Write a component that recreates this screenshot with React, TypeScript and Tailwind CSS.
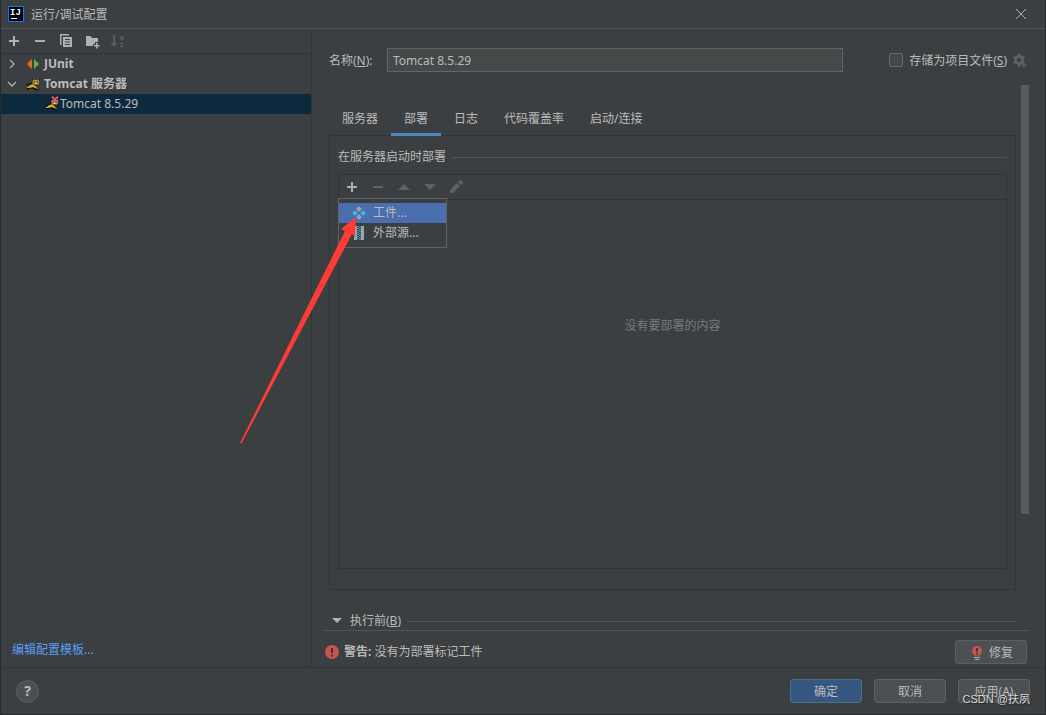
import type { ReactNode } from "react";

const tabs = ["服务器", "部署", "日志", "代码覆盖率", "启动/连接"];

function Icon({ children, className = "" }: { children: ReactNode; className?: string }) {
  return (
    <svg viewBox="0 0 16 16" className={`size-4 shrink-0 ${className}`} fill="none" aria-hidden="true">
      {children}
    </svg>
  );
}

function IconButton({ label, disabled, children }: { label: string; disabled?: boolean; children: ReactNode }) {
  return (
    <button type="button" aria-label={label} disabled={disabled} className={disabled ? "text-[#5f6264]" : "text-[#afb1b3]"}>
      <Icon>{children}</Icon>
    </button>
  );
}

const plus = <path d="M7 3h2v4h4v2H9v4H7V9H3V7h4z" fill="currentColor" />;
const minus = <path d="M3 7h10v2H3z" fill="currentColor" />;

function TomcatIcon({ failed }: { failed?: boolean }) {
  return (
    <Icon>
      {/* tail, back and legs */}
      <path d="M1 8.500h3l4-1.500M2 13.500l2.500-1.500H8l3 1.500h3" stroke="#14140f" strokeWidth="1.500" />
      <path d="M3.500 10.500 5 9l4-.8 1.500 1.300 1 2-1.500.5-2-1-3.500 1z" fill="#dea834" />
      <path d="M2 11.500h2M10.500 11.500l2 1" stroke="#dea834" />
      {/* head */}
      <path d="m7.500 3 1.500 1h3.500L14 3v4.500L12.500 9H9L7.500 7.500z" fill="#b8924a" />
      <path d="M7.500 3v1.500M14 3v1.500M9 9h3.500" stroke="#14140f" />
      <path d="M8.500 5.500H10v1H8.500zM11.500 5.500H13v1h-1.500z" fill="#3b3115" />
      <path d="M10 7h1.500v1H10z" fill="#f4e3b0" />
      {failed && <path d="m8 .5 6 6m0-6-6 6" stroke="#e0555b" strokeWidth="1.800" />}
    </Icon>
  );
}

function Button({ primary, children }: { primary?: boolean; children: ReactNode }) {
  return (
    <button
      type="button"
      className={`flex h-6 w-[72px] items-center justify-center gap-1 rounded-[3px] border pt-px ${
        primary ? "border-[#4c708c] bg-[#365880]" : "border-[#5e6060] bg-[#4c5052]"
      }`}
    >
      {children}
    </button>
  );
}

function Sidebar() {
  return (
    <aside className="flex w-[311px] shrink-0 flex-col border-r border-[#323537]">
      <div className="flex h-[25px] items-center gap-[10px] border-b border-[#323537] px-[5px]">
        <IconButton label="添加">{plus}</IconButton>
        <IconButton label="移除">{minus}</IconButton>
        <IconButton label="复制">
          <path d="M2 1h9v1.500H3.500V12H2z" fill="currentColor" />
          <path d="M5 4h9v10H5zm2 2v1h5V6zm0 2.500v1h5v-1zM7 11v1h5v-1z" fill="currentColor" fillRule="evenodd" />
        </IconButton>
        <IconButton label="新建文件夹">
          <path d="M2 3h4.500L8 5h6v4h-3v2H9v2H2z" fill="currentColor" />
          <path d="M12 10h1.500v2h2v1.500h-2v2H12v-2h-2V12h2z" fill="currentColor" />
        </IconButton>
        <IconButton label="排序" disabled>
          <path d="M4 2v11M1.500 10 4 12.500 6.500 10" stroke="currentColor" strokeWidth="1.500" />
          <g fontSize="7" fontWeight="700" fill="currentColor" className="font-['Liberation_Sans',sans-serif]">
            <text x="10" y="7">a</text>
            <text x="10" y="14">z</text>
          </g>
        </IconButton>
      </div>
      <ul role="tree" className="flex-1">
        <li role="treeitem" aria-expanded="false" className="flex h-5 items-center pl-[3px] font-bold">
          <Icon><path d="m6 4 4 4-4 4" stroke="#afb1b3" strokeWidth="1.300" /></Icon>
          <Icon className="mr-[3px] ml-[5px]">
            <path d="M7 3v10L2 8z" fill="#f26522" />
            <path d="M9 3v10l5-5z" fill="#62b543" />
          </Icon>
          JUnit
        </li>
        <li role="treeitem" aria-expanded="true" className="flex h-5 items-center pl-[3px] font-bold">
          <Icon><path d="m4 6 4 4 4-4" stroke="#afb1b3" strokeWidth="1.300" /></Icon>
          <span className="mr-[3px] ml-[5px]"><TomcatIcon /></span>
          Tomcat 服务器
        </li>
        <li role="treeitem" aria-selected="true" className="flex h-5 items-center bg-[#0d293e] pl-[43px]">
          <TomcatIcon failed />
          Tomcat 8.5.29
        </li>
      </ul>
      <div className="px-[11px] pb-2">
        <a href="#templates" className="text-[#589df6]">编辑配置模板...</a>
      </div>
    </aside>
  );
}

function AddMenu() {
  return (
    <div role="menu" className="absolute top-[23px] -left-px w-[109px] border border-[#616365] bg-[#3c3f41] py-1">
      <button type="button" role="menuitem" className="flex h-5 w-full items-center gap-[6px] bg-[#4b6eaf] pl-3">
        <Icon>
          <g fill="#9aa7b0" stroke="#9aa7b0" strokeWidth="2" strokeLinejoin="round">
            <path d="m8 2.500 1.500 1.500L8 5.500 6.500 4zM8 10.500l1.500 1.500L8 13.500 6.500 12z" />
          </g>
          <g fill="#40b6e0" stroke="#40b6e0" strokeWidth="2" strokeLinejoin="round">
            <path d="m4 6.500 1.500 1.500L4 9.500 2.500 8zM12 6.500l1.500 1.500-1.500 1.500-1.500-1.500z" />
          </g>
        </Icon>
        工件...
      </button>
      <button type="button" role="menuitem" className="flex h-5 w-full items-center gap-[6px] pl-3">
        <Icon>
          <path d="M3 1h3v14H3zM10 1h3v14h-3z" fill="#9aa7b0" />
          <path d="M7 1v14M9 2v13" stroke="#40b6e0" strokeWidth="1.500" strokeDasharray="1 1" />
        </Icon>
        外部源...
      </button>
    </div>
  );
}

function DeployPanel() {
  return (
    <section className="-mt-px flex flex-1 flex-col border border-[#323537] px-2 pt-3 pb-5">
      <div className="flex items-center gap-[6px]">
        <h2>在服务器启动时部署</h2>
        <div className="h-px flex-1 bg-[#515456]" />
      </div>
      <div className="mt-2 flex flex-1 flex-col border border-[#323537]">
        <div className="relative flex h-[25px] items-center gap-[10px] border-b border-[#323537] px-[5px]">
          <IconButton label="添加部署">{plus}</IconButton>
          <IconButton label="移除部署" disabled>{minus}</IconButton>
          <IconButton label="上移" disabled><path d="m2 11 6-6 6 6z" fill="currentColor" /></IconButton>
          <IconButton label="下移" disabled><path d="m2 5 6 6 6-6z" fill="currentColor" /></IconButton>
          <IconButton label="编辑" disabled>
            <path d="m2 11 7-7 3 3-7 7H2zM10 3l2-2h1l2 2v1l-2 2z" fill="currentColor" />
          </IconButton>
          <AddMenu />
        </div>
        <p className="mt-[117px] text-center text-[#787a7c]">没有要部署的内容</p>
      </div>
    </section>
  );
}

export default function App() {
  return (
    <div className="relative flex min-h-screen flex-col border-x border-b border-[#27292a] bg-[#3c3f41] font-['Noto_Sans','Noto_Sans_CJK_SC',sans-serif] text-[12px] leading-[18px] text-[#bbbbbb]">
      <header className="flex h-[29px] items-center border-b border-[#515456] pl-[7px]">
        <svg viewBox="0 0 16 16" className="size-4" aria-hidden="true">
          <path d="M.5.5h15v15H.5z" fill="#000" stroke="#087cfa" />
          <text x="2" y="9" fontSize="9" fontWeight="700" fill="#fff" className="font-['Liberation_Mono',monospace]">IJ</text>
          <path d="M3 12h6v1H3z" fill="#fff" />
        </svg>
        <h1 className="ml-[7px] flex-1 pt-px">运行/调试配置</h1>
        <button type="button" aria-label="关闭" className="mr-4">
          <Icon><path d="m3 3 10 10M13 3 3 13" stroke="#afb1b3" /></Icon>
        </button>
      </header>

      <div className="flex flex-1">
        <Sidebar />
        <main className="flex min-w-0 flex-1 flex-col">
          <div className="flex items-center pt-[19px] pr-[17px] pl-[17px]">
            <label htmlFor="name" className="w-[58px] pt-px">名称(<u>N</u>):</label>
            <input
              id="name"
              defaultValue="Tomcat 8.5.29"
              className="h-6 min-w-0 flex-1 border border-[#646464] bg-[#45494a] px-[5px]"
            />
            <input
              id="store"
              type="checkbox"
              className="ml-[46px] size-[14px] appearance-none rounded-[2px] border border-[#6b6b6b] bg-[#43494a]"
            />
            <label htmlFor="store" className="ml-[6px] pt-px">存储为项目文件(<u>S</u>)</label>
            <button type="button" aria-label="存储选项" className="ml-[5px] text-[#606365]">
              <Icon>
                <circle cx="7" cy="8" r="3.500" stroke="currentColor" strokeWidth="2.500" />
                <path d="M7 1.500v3M7 11.500v3M1.500 4.800 4 6.300M10 9.700l2.500 1.500M1.500 11.200 4 9.700M10 6.300l2.500-1.500" stroke="currentColor" strokeWidth="2.500" />
                <path d="M9 12.500h6l-3 3z" fill="currentColor" />
              </Icon>
            </button>
          </div>

          <div className="flex flex-1 pt-[13px] pr-4">
            <div className="flex min-w-0 flex-1 flex-col pt-4 pl-[17px]">
              <div role="tablist" className="z-10 flex">
                {tabs.map((tab) => (
                  <button
                    key={tab}
                    type="button"
                    role="tab"
                    aria-selected={tab === "部署"}
                    className={`h-[35px] border-b-3 px-[13px] pt-1 ${tab === "部署" ? "border-[#4a88c7]" : "border-transparent"}`}
                  >
                    {tab}
                  </button>
                ))}
              </div>
              <DeployPanel />
              <div className="mt-[22px] flex items-center">
                <button type="button" className="flex items-center gap-[5px]">
                  <Icon><path d="M3 5h10l-5 5z" fill="#afb1b3" /></Icon>
                  <span>执行前(<u>B</u>)</span>
                </button>
                <div className="ml-[6px] h-px flex-1 bg-[#515456]" />
              </div>
            </div>
            <div className="ml-[5px] h-[429px] w-2 bg-[#595b5d]" />
          </div>

          <div className="mr-[15px] ml-3 flex h-[37px] items-center border-t border-[#515456] pt-[6px] pr-[3px]">
            <Icon>
              <circle cx="8" cy="8" r="7" fill="#c75450" />
              <path d="M7 4h2v5H7zM7 10.500h2v2H7z" fill="#34383a" />
            </Icon>
            <p className="ml-1 flex-1"><b>警告:</b> 没有为部署标记工件</p>
            <Button>
              <Icon>
                <path d="M8 1a5 5 0 0 1 5 5c0 2-1.500 3-2 4.500H5C4.500 9 3 8 3 6a5 5 0 0 1 5-5z" fill="#c75450" />
                <path d="M7 3h2v4H7zM7 8h2v1.500H7z" fill="#3f4244" />
                <path d="M5 12.500h6M6 14.500h4" stroke="#afb1b3" />
              </Icon>
              修复
            </Button>
          </div>
        </main>
      </div>

      <footer className="flex h-[47px] items-center gap-3 border-t border-[#323537] pr-[15px] pl-[15px]">
        <button
          type="button"
          aria-label="帮助"
          className="mr-auto size-[23px] rounded-full border border-[#5e6060] bg-[#4c5052] text-[14px] font-bold"
        >
          ?
        </button>
        <Button primary>确定</Button>
        <Button>取消</Button>
        <Button>应用(A)</Button>
      </footer>

      <span className="pointer-events-none absolute right-[15px] bottom-[6px] font-['Liberation_Sans','Noto_Sans_CJK_SC',sans-serif] text-[11px] text-[#d8d8d8] text-shadow-[1px_1px_1px_#222222]">
        CSDN @扶夙
      </span>
      {/* pointer from the sidebar to the first menu entry */}
      <svg viewBox="0 0 116 227" className="pointer-events-none absolute top-[217px] left-[239px] h-[227px] w-[116px]" aria-hidden="true">
        <path d="M116 0 101 12l4 2L0 226l1.500.5L112 17l3 3z" fill="#ff3b38" />
      </svg>
    </div>
  );
}
